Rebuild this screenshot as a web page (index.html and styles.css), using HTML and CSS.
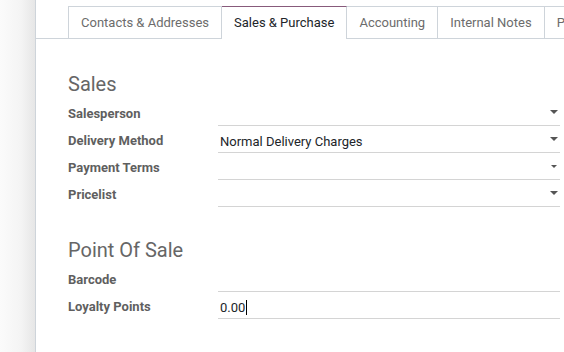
FILE: index.html
```html
<!DOCTYPE html>
<html lang="en">
  <head>
    <meta charset="UTF-8" />
    <title>Contact - Sales &amp; Purchase</title>
    <link rel="stylesheet" href="styles.css">
  </head>
  <body>
    <div class="gutter"></div>

    <div class="sheet">
      <ul class="tabs">
        <li class="tab">Contacts &amp; Addresses</li>
        <li class="tab active">Sales &amp; Purchase</li>
        <li class="tab">Accounting</li>
        <li class="tab">Internal Notes</li>
        <li class="tab">Partner Assignment</li>
      </ul>

      <div class="page">
        <!-- Sales group -->
        <section class="group">
          <h2 class="group-title">Sales</h2>
          <div class="field">
            <label class="field-label">Salesperson</label>
            <div class="field-input select"><span class="value"></span><span class="caret"></span></div>
          </div>
          <div class="field">
            <label class="field-label">Delivery Method</label>
            <div class="field-input select"><span class="value">Normal Delivery Charges</span><span class="caret"></span></div>
          </div>
          <div class="field">
            <label class="field-label">Payment Terms</label>
            <div class="field-input select"><span class="value"></span><span class="caret small"></span></div>
          </div>
          <div class="field">
            <label class="field-label">Pricelist</label>
            <div class="field-input select"><span class="value"></span><span class="caret"></span></div>
          </div>
        </section>

        <!-- Point of sale group -->
        <section class="group">
          <h2 class="group-title">Point Of Sale</h2>
          <div class="field">
            <label class="field-label">Barcode</label>
            <div class="field-input"><span class="value"></span></div>
          </div>
          <div class="field">
            <label class="field-label">Loyalty Points</label>
            <div class="field-input"><span class="value">0.00<span class="cursor"></span></span></div>
          </div>
        </section>
      </div>
    </div>
  </body>
</html>
```

FILE: styles.css
```css
:root {
  --color-bg: #ffffff;
  --color-gutter: #f2f2f2;
  --color-border: #ced4da;
  --color-line: #d4d4d4;
  --color-label: #5f5f5f;
  --color-title: #666666;
  --color-text: #212529;
  --color-tab: #6c6c6c;
  --color-brand: #875a7b;
}

* {
  box-sizing: border-box;
}

body {
  display: flex;
  margin: 0;
  height: 100vh;
  overflow: hidden;
  font-family: Roboto, "Liberation Sans", sans-serif;
  font-size: 13px;
  color: var(--color-text);
  background-color: var(--color-bg);
}

.gutter {
  flex: 0 0 35px;
  background: linear-gradient(to right, #fbfbfb, #f4f4f4 60%, #e6e6e6);
}

.sheet {
  flex: 1;
  border-left: 1px solid var(--color-border);
  background-color: var(--color-bg);
  min-width: 0;
  overflow: hidden;
}

/* Notebook tabs */
.tabs {
  display: flex;
  list-style: none;
  margin: 6px 0 0;
  padding: 0 0 0 32px;
  border-bottom: 1px solid var(--color-border);
  white-space: nowrap;
}

.tab {
  flex: none;
  height: 33px;
  margin-bottom: -1px;
  padding: 0 12px;
  line-height: 32px;
  color: var(--color-tab);
  border: 1px solid var(--color-border);
  border-left-width: 0;
  border-bottom: none;
}

.tab:first-child {
  border-left-width: 1px;
}

.tab.active {
  color: var(--color-text);
  background-color: var(--color-bg);
  border-top-color: var(--color-brand);
}

/* Form groups */
.page {
  padding: 31px 4px 0 32px;
}

.group + .group {
  margin-top: 29px;
}

.group-title {
  margin: 0 0 1px;
  height: 28px;
  font-size: 20px;
  font-weight: 400;
  line-height: 29px;
  color: var(--color-title);
}

.field {
  display: flex;
  align-items: stretch;
  height: 27px;
}

.field-label {
  flex: 0 0 150px;
  padding-top: 1px;
  font-weight: 700;
  line-height: 27px;
  color: var(--color-label);
}

.field-input {
  flex: 1;
  display: flex;
  align-items: center;
  padding: 0 2px;
  border-bottom: 1px solid var(--color-line);
}

.field-input .value {
  flex: 1;
  display: flex;
  align-items: center;
  height: 16px;
  margin-top: 4px;
}

.caret {
  width: 0;
  height: 0;
  border-left: 4px solid transparent;
  border-right: 4px solid transparent;
  border-top: 4px solid #555555;
}

.caret.small {
  border-left-width: 3px;
  border-right-width: 3px;
  border-top-width: 3px;
  margin-right: 1px;
}

.cursor {
  display: inline-block;
  width: 1px;
  height: 15px;
  margin-left: 1px;
  background-color: #000000;
}
```
